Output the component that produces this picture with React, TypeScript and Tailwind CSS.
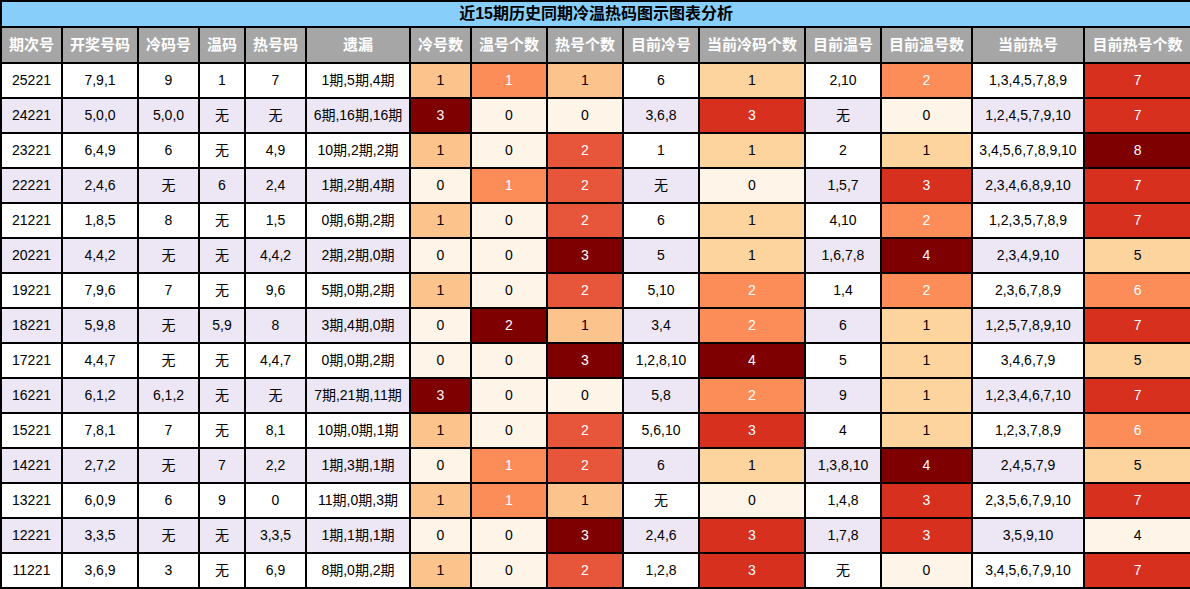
import React from "react";

type Row = string[];

const rows: Row[] = [
  ["25221", "7,9,1", "9", "1", "7", "1期,5期,4期", "1", "1", "1", "6", "1", "2,10", "2", "1,3,4,5,7,8,9", "7"],
  ["24221", "5,0,0", "5,0,0", "无", "无", "6期,16期,16期", "3", "0", "0", "3,6,8", "3", "无", "0", "1,2,4,5,7,9,10", "7"],
  ["23221", "6,4,9", "6", "无", "4,9", "10期,2期,2期", "1", "0", "2", "1", "1", "2", "1", "3,4,5,6,7,8,9,10", "8"],
  ["22221", "2,4,6", "无", "6", "2,4", "1期,2期,4期", "0", "1", "2", "无", "0", "1,5,7", "3", "2,3,4,6,8,9,10", "7"],
  ["21221", "1,8,5", "8", "无", "1,5", "0期,6期,2期", "1", "0", "2", "6", "1", "4,10", "2", "1,2,3,5,7,8,9", "7"],
  ["20221", "4,4,2", "无", "无", "4,4,2", "2期,2期,0期", "0", "0", "3", "5", "1", "1,6,7,8", "4", "2,3,4,9,10", "5"],
  ["19221", "7,9,6", "7", "无", "9,6", "5期,0期,2期", "1", "0", "2", "5,10", "2", "1,4", "2", "2,3,6,7,8,9", "6"],
  ["18221", "5,9,8", "无", "5,9", "8", "3期,4期,0期", "0", "2", "1", "3,4", "2", "6", "1", "1,2,5,7,8,9,10", "7"],
  ["17221", "4,4,7", "无", "无", "4,4,7", "0期,0期,2期", "0", "0", "3", "1,2,8,10", "4", "5", "1", "3,4,6,7,9", "5"],
  ["16221", "6,1,2", "6,1,2", "无", "无", "7期,21期,11期", "3", "0", "0", "5,8", "2", "9", "1", "1,2,3,4,6,7,10", "7"],
  ["15221", "7,8,1", "7", "无", "8,1", "10期,0期,1期", "1", "0", "2", "5,6,10", "3", "4", "1", "1,2,3,7,8,9", "6"],
  ["14221", "2,7,2", "无", "7", "2,2", "1期,3期,1期", "0", "1", "2", "6", "1", "1,3,8,10", "4", "2,4,5,7,9", "5"],
  ["13221", "6,0,9", "6", "9", "0", "11期,0期,3期", "1", "1", "1", "无", "0", "1,4,8", "3", "2,3,5,6,7,9,10", "7"],
  ["12221", "3,3,5", "无", "无", "3,3,5", "1期,1期,1期", "0", "0", "3", "2,4,6", "3", "1,7,8", "3", "3,5,9,10", "4"],
  ["11221", "3,6,9", "3", "无", "6,9", "8期,0期,2期", "1", "0", "2", "1,2,8", "3", "无", "0", "3,4,5,6,7,9,10", "7"],
];

const headers = [
  "期次号", "开奖号码", "冷码号", "温码", "热号码", "遗漏", "冷号数", "温号个数",
  "热号个数", "目前冷号", "当前冷码个数", "目前温号", "目前温号数", "当前热号", "目前热号个数",
];

const widths = [61, 76, 61, 46, 61, 104, 61, 76, 76, 76, 106, 76, 91, 112, 107];

const cream = "bg-[#fef4e8] text-black";
const light = "bg-[#fdc38d] text-black";
const pale = "bg-[#fdd49e] text-black";
const orange = "bg-[#fc8d59] text-white";
const red1 = "bg-[#e7553a] text-white";
const red2 = "bg-[#d7301f] text-white";
const dark = "bg-[#7f0000] text-white";

// colour scale per column (Excel style, each column its own range)
const scales: Record<number, Record<string, string>> = {
  6: { "0": cream, "1": light, "2": red1, "3": dark },
  7: { "0": cream, "1": orange, "2": dark },
  8: { "0": cream, "1": light, "2": red1, "3": dark },
  10: { "0": cream, "1": pale, "2": orange, "3": red2, "4": dark },
  12: { "0": cream, "1": pale, "2": orange, "3": red2, "4": dark },
  14: { "4": cream, "5": pale, "6": orange, "7": red2, "8": dark },
};

const font = { fontFamily: '"Liberation Sans", "Noto Sans CJK SC", sans-serif' };

export default function App() {
  return (
    <div className="w-[1190px] h-[589px] bg-white" style={font}>
      <table className="table-fixed border-collapse w-[1190px] text-[14px]">
        <colgroup>
          {widths.map((w, i) => (
            <col key={i} style={{ width: w }} />
          ))}
        </colgroup>
        <thead>
          <tr>
            <th
              colSpan={15}
              className="h-[26px] p-0 border-2 border-black bg-[#87cefa] text-[16px] font-bold text-black leading-none"
            >
              近15期历史同期冷温热码图示图表分析
            </th>
          </tr>
          <tr>
            {headers.map((h) => (
              <th
                key={h}
                className="h-[36px] p-0 border-2 border-black bg-[#a6a6a6] text-white text-[15px] font-bold whitespace-nowrap"
              >
                {h}
              </th>
            ))}
          </tr>
        </thead>
        <tbody>
          {rows.map((r, ri) => {
            const stripe = ri % 2 === 0 ? "bg-white text-black" : "bg-[#ece6f5] text-black";
            return (
              <tr key={r[0]}>
                {r.map((v, ci) => {
                  const heat = scales[ci]?.[v];
                  return (
                    <td
                      key={ci}
                      className={`h-[35px] p-0 border-2 border-black text-center whitespace-nowrap ${heat ?? stripe}`}
                    >
                      {v}
                    </td>
                  );
                })}
              </tr>
            );
          })}
        </tbody>
      </table>
    </div>
  );
}
